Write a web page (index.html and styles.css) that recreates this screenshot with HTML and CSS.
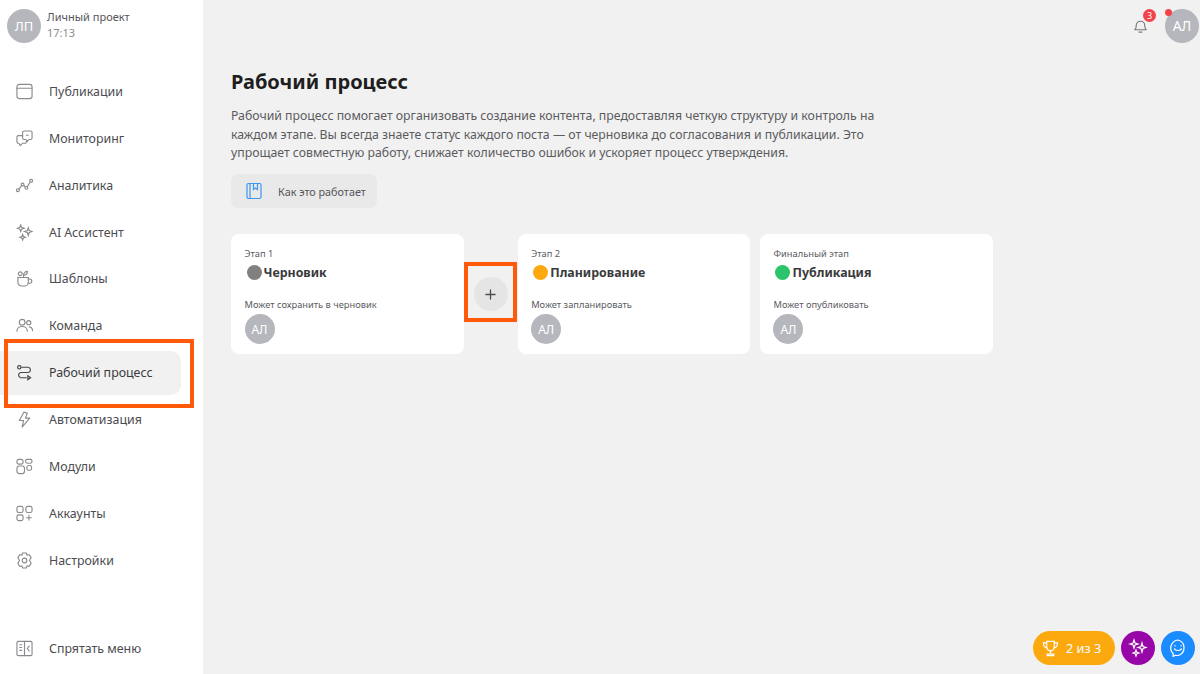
FILE: index.html
```html
<!DOCTYPE html>
<html lang="ru">
<head>
  <meta charset="UTF-8" />
  <meta name="viewport" content="width=device-width, initial-scale=1.0"/>
  <title>Рабочий процесс</title>
  <link rel="stylesheet" href="styles.css">
</head>
<body>
  <div class="app">

    <!-- Sidebar -->
    <aside class="sidebar">
      <div class="project">
        <div class="avatar avatar-lg">ЛП</div>
        <div class="project-info">
          <div class="project-name">Личный проект</div>
          <div class="project-time">17:13</div>
        </div>
      </div>

      <nav class="nav">
        <a class="nav-item">
          <svg class="nav-icon" viewBox="0 0 18 18"><rect x="1" y="1.500" width="16" height="15" rx="2.500"/><path d="M1 5.500h16"/></svg>
          Публикации
        </a>
        <a class="nav-item">
          <svg class="nav-icon" viewBox="0 0 18 18"><path d="M7 2.500a1.500 1.500 0 0 1 1.500-1.500h7A1.500 1.500 0 0 1 17 2.500v6A1.500 1.500 0 0 1 15.500 10H14l-2 2-1.500-2H8.500A1.500 1.500 0 0 1 7 8.500z"/><path d="M7 6H2.500A1.500 1.500 0 0 0 1 7.500v5A1.500 1.500 0 0 0 2.500 14H3l1.500 2.500L7 14h2.500a1.500 1.500 0 0 0 1.500-1.500V12"/><path d="M11 5.500h2"/></svg>
          Мониторинг
        </a>
        <a class="nav-item">
          <svg class="nav-icon" viewBox="0 0 18 18"><circle cx="2" cy="14" r="1.500"/><circle cx="7" cy="8" r="1.500"/><circle cx="11" cy="11.500" r="1.500"/><circle cx="16" cy="4" r="1.500"/><path d="M3 12.800 6 9.200M8.200 9l1.700 1.500M11.900 10.200 15.100 5.300"/></svg>
          Аналитика
        </a>
        <a class="nav-item">
          <svg class="nav-icon" viewBox="0 0 18 18"><path d="M5 1l.9 2.600L8.500 4.500 5.900 5.400 5 8 4.100 5.400 1.500 4.500l2.600-.9z"/><path d="M13 4l1 3 3 1-3 1-1 3-1-3-3-1 3-1z"/><path d="M7 11l.8 2.200L10 14l-2.200.8L7 17l-.8-2.200L4 14l2.200-.8z"/></svg>
          AI Ассистент
        </a>
        <a class="nav-item">
          <svg class="nav-icon" viewBox="0 0 18 18"><path d="M2 8h11v5a4 4 0 0 1-4 4H6a4 4 0 0 1-4-4z"/><path d="M13 9.500h1.500a2 2 0 0 1 0 4.500H13"/><circle cx="4.500" cy="4" r="2"/><path d="M8 8V5.500C8 3 10 1.500 12 1.500c0 2.500-1.500 4-4 4"/></svg>
          Шаблоны
        </a>
        <a class="nav-item">
          <svg class="nav-icon" viewBox="0 0 18 18"><circle cx="6.500" cy="5.500" r="3"/><path d="M1 15c0-3 2.500-5 5.500-5s5.500 2 5.500 5"/><circle cx="13.500" cy="6" r="2.200"/><path d="M14 10.500c2 .3 3.500 2 3.500 4"/></svg>
          Команда
        </a>
        <a class="nav-item active">
          <svg class="nav-icon dark" viewBox="0 0 18 18"><circle cx="3.500" cy="3.500" r="1.800"/><path d="M6 3.500h7a2.800 2.800 0 0 1 0 5.500H5a2.800 2.800 0 0 0 0 5.500h6"/><path d="M12.500 12.500l3 2-3 2z"/></svg>
          Рабочий процесс
        </a>
        <a class="nav-item">
          <svg class="nav-icon" viewBox="0 0 18 18"><path d="M8.500 1 3.500 10H8l-1.500 7 8-9.500H10L12 2.500z" stroke-linejoin="round"/></svg>
          Автоматизация
        </a>
        <a class="nav-item">
          <svg class="nav-icon" viewBox="0 0 18 18"><rect x="1" y="1.500" width="6.500" height="5" rx="2"/><rect x="10" y="1.500" width="7" height="4" rx="2"/><rect x="1" y="8.500" width="8" height="8" rx="2.500"/><rect x="11.500" y="8" width="5" height="5" rx="2"/></svg>
          Модули
        </a>
        <a class="nav-item">
          <svg class="nav-icon" viewBox="0 0 18 18"><rect x="1" y="1.500" width="6.500" height="6.500" rx="2"/><rect x="10.500" y="1.500" width="6.500" height="6.500" rx="2"/><rect x="1" y="10.500" width="6.500" height="6" rx="2"/><path d="M13.700 11v5M11.200 13.500h5"/></svg>
          Аккаунты
        </a>
        <a class="nav-item">
          <svg class="nav-icon" viewBox="0 0 18 18"><path d="M7 1h4l.6 2.400 2.300-.8L16 6l-1.700 3 1.700 3-2.100 3.400-2.300-.8L11 17H7l-.6-2.400-2.300.8L2 12l1.700-3L2 6l2.100-3.400 2.300.8z" stroke-linejoin="round"/><circle cx="9" cy="9" r="2.500"/></svg>
          Настройки
        </a>
      </nav>

      <a class="nav-item hide-menu">
        <svg class="nav-icon" viewBox="0 0 18 18"><rect x="1" y="1.500" width="16" height="15" rx="1.500"/><path d="M9 1.500v15M4 5h2M4 8h2M4 11h2M14 6.500 12 9l2 2.500"/></svg>
        Спрятать меню
      </a>
    </aside>

    <!-- Main content -->
    <main class="main">
      <div class="topbar">
        <div class="bell">
          <svg viewBox="0 0 18 18" class="bell-icon"><path d="M3 13.500c1-1 1.500-2 1.500-4.500a4.500 4.500 0 0 1 9 0c0 2.500.5 3.500 1.500 4.500z" stroke-linejoin="round"/><path d="M7.500 16h3"/></svg>
          <span class="badge">3</span>
        </div>
        <div class="avatar avatar-user">АЛ<span class="dot"></span></div>
      </div>

      <h1>Рабочий процесс</h1>
      <p class="intro">Рабочий процесс помогает организовать создание контента, предоставляя четкую структуру и контроль на каждом этапе. Вы всегда знаете статус каждого поста — от черновика до согласования и публикации. Это упрощает совместную работу, снижает количество ошибок и ускоряет процесс утверждения.</p>

      <button class="how-btn">
        <svg viewBox="0 0 18 18" class="how-icon"><rect x="2" y="1.500" width="14" height="15" rx="1.500"/><path d="M5 1.500v15M8.500 1.500v6l2-1.500 2 1.500v-6"/></svg>
        Как это работает
      </button>

      <div class="stages">
        <section class="card">
          <div class="stage-label">Этап 1</div>
          <div class="stage-title"><span class="status gray"></span>Черновик</div>
          <div class="stage-note">Может сохранить в черновик</div>
          <div class="avatar avatar-sm">АЛ</div>
        </section>

        <div class="add-col">
          <button class="add-btn">
            <svg viewBox="0 0 12 12"><path d="M6 1v10M1 6h10"/></svg>
          </button>
          <div class="mark mark-add"></div>
        </div>

        <section class="card">
          <div class="stage-label">Этап 2</div>
          <div class="stage-title"><span class="status orange"></span>Планирование</div>
          <div class="stage-note">Может запланировать</div>
          <div class="avatar avatar-sm">АЛ</div>
        </section>

        <section class="card card-last">
          <div class="stage-label">Финальный этап</div>
          <div class="stage-title"><span class="status green"></span>Публикация</div>
          <div class="stage-note">Может опубликовать</div>
          <div class="avatar avatar-sm">АЛ</div>
        </section>
      </div>
    </main>

    <!-- Orange annotation around the active menu item -->
    <div class="mark mark-nav"></div>

    <!-- Floating buttons -->
    <div class="floating">
      <div class="pill">
        <svg viewBox="0 0 18 18"><path d="M5 1.500h8v6a4 4 0 0 1-8 0z"/><path d="M5 3H1.500c0 3 1 5 4 5.500M13 3h3.500c0 3-1 5-4 5.500M9 11.500V15M5.500 16.500h7v-1.500h-7z"/></svg>
        2 из 3
      </div>
      <div class="round purple">
        <svg viewBox="0 0 20 20"><path d="M6 2l1 3 3 1-3 1-1 3-1-3-3-1 3-1z"/><path d="M14 5l1 3.500 3 1-3 1L14 14l-1-3.500-3-1 3-1z"/><path d="M8 12l.8 2.200 2.200.8-2.200.8L8 18l-.8-2.200L5 15l2.200-.8z"/></svg>
      </div>
      <div class="round blue">
        <svg viewBox="0 0 20 20"><path d="M10 2a8 8 0 0 1 0 15.500c-1 0-1.500 0-2.500-.3L5 18.500l.2-2.800A8 8 0 0 1 10 2z" stroke-linejoin="round"/><path d="M7 7.500v.5M13 7.500v.5M6.500 11c2 2 5 2 7 0"/></svg>
      </div>
    </div>

  </div>
</body>
</html>
```

FILE: styles.css
```css
* {
  box-sizing: border-box;
}
html, body {
  margin: 0;
  height: 100%;
  overflow: hidden;
}
body {
  font-family: "Noto Sans", sans-serif;
  color: #3a3a3c;
  background-color: #f1f1f1;
}
svg {
  fill: none;
  stroke: currentColor;
  stroke-width: 1.2;
  stroke-linecap: round;
}
.app {
  position: relative;
  display: flex;
  height: 674px;
}

/* Sidebar */
.sidebar {
  width: 203px;
  flex: none;
  display: flex;
  flex-direction: column;
  background-color: #fff;
}
.project {
  display: flex;
  gap: 6px;
  padding: 9px 0 0 7px;
  height: 68px;
}
.project-info {
  font-size: 11px;
  line-height: 16px;
}
.project-name {
  color: #55555a;
}
.project-time {
  color: #8b8b90;
}
.avatar {
  display: flex;
  align-items: center;
  justify-content: center;
  flex: none;
  border-radius: 50%;
  background-color: #b5b7bc;
  color: #fff;
}
.avatar-lg {
  width: 34px;
  height: 34px;
  font-size: 13px;
}
.nav {
  display: flex;
  flex-direction: column;
  gap: 2.900px;
  width: 181px;
  padding-top: 1.400px;
}
.nav-item {
  display: flex;
  align-items: center;
  gap: 16px;
  height: 44px;
  padding-left: 16px;
  font-size: 12.400px;
  color: #4c4c50;
}
.nav-item.active {
  background-color: #f1f1f1;
  border-radius: 0 10px 10px 0;
  color: #3a3a3c;
}
.nav-icon {
  width: 17px;
  height: 17px;
  flex: none;
  color: #8a8a8e;
}
.nav-icon.dark {
  color: #45454a;
}
.hide-menu {
  margin-top: auto;
  margin-bottom: 4px;
}

/* Main */
.main {
  flex: 1;
  padding: 0 0 0 28px;
}
.topbar {
  display: flex;
  justify-content: flex-end;
  align-items: center;
  gap: 16px;
  height: 51px;
  padding: 0 1px 0 0;
}
.bell {
  position: relative;
  width: 17px;
  height: 17px;
}
.bell-icon {
  display: block;
  color: #77777b;
}
.badge {
  position: absolute;
  top: -8px;
  left: 11px;
  width: 13px;
  height: 13px;
  border-radius: 50%;
  background-color: #f4424a;
  color: #fff;
  font-size: 9px;
  line-height: 13px;
  text-align: center;
}
.avatar-user {
  position: relative;
  width: 34px;
  height: 34px;
  font-size: 14px;
}
.dot {
  position: absolute;
  top: 0;
  left: 0;
  width: 7px;
  height: 7px;
  border-radius: 50%;
  background-color: #f4424a;
}
h1 {
  margin: 17px 0 0;
  font-size: 20px;
  line-height: 28px;
  font-weight: 700;
  color: #1e1e20;
}
.intro {
  width: 660px;
  margin: 11px 0 0;
  font-size: 12.270px;
  line-height: 18.500px;
  color: #5b5b5f;
}
.how-btn {
  display: flex;
  align-items: center;
  gap: 15px;
  width: 146px;
  height: 34px;
  margin-top: 11.500px;
  padding: 0 0 0 14px;
  border: none;
  border-radius: 8px;
  background-color: #e9e9e9;
  color: #55555a;
  font-family: inherit;
  font-size: 10.800px;
}
.how-icon {
  width: 18px;
  height: 18px;
  color: #3f97f2;
}

/* Stages */
.stages {
  display: flex;
  margin-top: 26px;
}
.card {
  width: 232.700px;
  height: 120px;
  padding: 13px 13.500px;
  border-radius: 8px;
  background-color: #fff;
}
.card-last {
  margin-left: 9.600px;
}
.stage-label {
  font-size: 9.300px;
  line-height: 14px;
  color: #5b5b5f;
}
.stage-title {
  display: flex;
  align-items: center;
  height: 22px;
  padding-left: 2px;
  gap: 2px;
  font-size: 12.400px;
  font-weight: 700;
  color: #3a3a3c;
}
.status {
  width: 15px;
  height: 15px;
  border-radius: 50%;
}
.status.gray {
  background-color: #808080;
}
.status.orange {
  background-color: #fba90f;
}
.status.green {
  background-color: #2bc46a;
}
.stage-note {
  margin-top: 15px;
  font-size: 9.300px;
  line-height: 14px;
  color: #5b5b5f;
}
.avatar-sm {
  width: 30px;
  height: 30px;
  margin-top: 2px;
  font-size: 12px;
}
.add-col {
  position: relative;
  display: flex;
  align-items: center;
  justify-content: center;
  width: 54px;
  height: 120px;
}
.add-btn {
  display: flex;
  align-items: center;
  justify-content: center;
  width: 34px;
  height: 34px;
  padding: 0;
  border: none;
  border-radius: 50%;
  background-color: #e5e5e5;
  color: #4c4c50;
}
.add-btn svg {
  width: 11px;
  height: 11px;
  stroke-width: 1.400;
}

/* Orange annotations */
.mark {
  position: absolute;
  border: 4px solid #ff5a0a;
}
.mark-nav {
  top: 339px;
  left: 4px;
  width: 190px;
  height: 69px;
}
.mark-add {
  top: 28px;
  left: 0;
  width: 53px;
  height: 60px;
}

/* Floating buttons */
.floating {
  position: absolute;
  right: 5px;
  bottom: 9px;
  display: flex;
  gap: 6px;
}
.pill {
  display: flex;
  align-items: center;
  gap: 7px;
  width: 82px;
  height: 34px;
  padding-left: 9px;
  border-radius: 17px;
  background-color: #fba90f;
  color: #fff;
  font-size: 12.700px;
}
.pill svg {
  width: 17px;
  height: 17px;
}
.round {
  display: flex;
  align-items: center;
  justify-content: center;
  width: 34px;
  height: 34px;
  border-radius: 50%;
  color: #fff;
}
.round svg {
  width: 20px;
  height: 20px;
}
.purple {
  background-color: #9707a8;
}
.blue {
  background-color: #1a8cff;
}
```
